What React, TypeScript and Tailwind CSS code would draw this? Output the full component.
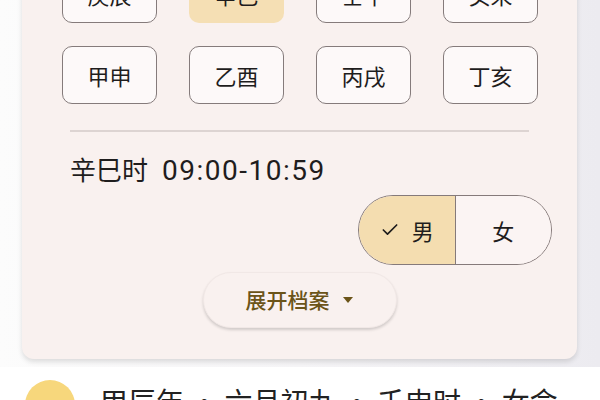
import { Check } from 'lucide-react';

const pillars = ['庚辰', '辛巳', '壬午', '癸未', '甲申', '乙酉', '丙戌', '丁亥'];
const selected = '辛巳';

export default function App() {
  return (
    <div
      className="w-[600px] h-[400px] overflow-hidden bg-white text-[#1f1d1d]"
      style={{ fontFamily: '"Noto Sans CJK SC", "Noto Sans", sans-serif' }}
    >
      {/* profile card area */}
      <div className="bg-gradient-to-r from-[#fcfcfc] via-[#f6f5f7] to-[#ecebf0] pb-[8px]">
        <div className="ml-[22px] w-[555px] -mt-[70px] rounded-b-[12px] bg-[#f9f1ef] pt-[35px] pb-[31px] shadow-[0_3px_5px_rgba(0,0,0,0.12)]">
          <div className="grid grid-cols-[repeat(4,95px)] gap-x-[32px] gap-y-[23px] pl-[40px]">
            {pillars.map((p) => (
              <div
                key={p}
                className={
                  p === selected
                    ? 'h-[58px] rounded-[10px] bg-[#f5dfb4] flex items-center justify-center text-[22px]'
                    : 'h-[58px] rounded-[10px] bg-[#fdf9f9] border-[1.5px] border-[#857b7b] flex items-center justify-center text-[22px]'
                }
              >
                {p}
              </div>
            ))}
          </div>

          <div className="mx-[48px] mt-[26px] h-[2px] bg-[#ddd4d2]" />

          <div className="pl-[48px] mt-[21px] text-[26px] leading-[32px] flex items-baseline">
            <span>辛巳时</span>
            <span className="ml-[14px] text-[28px] tracking-[1.5px] font-['Roboto',sans-serif]">09:00-10:59</span>
          </div>

          {/* gender toggle */}
          <div className="flex justify-end pr-[25px] mt-[8px]">
            <div className="flex h-[70px] w-[194px] rounded-full border-[1.5px] border-[#857a7a] overflow-hidden text-[22px]">
              <div className="flex-1 flex items-center justify-center gap-[12px] bg-[#f4ddb0] border-r-[1.5px] border-[#857a7a]">
                <Check size={20} strokeWidth={2} />
                <span>男</span>
              </div>
              <div className="flex-1 flex items-center justify-center bg-[#fbf4f3]">女</div>
            </div>
          </div>

          <div className="flex justify-center mt-[7px]">
            <div className="flex items-center gap-[12px] h-[56px] w-[194px] justify-center rounded-full bg-[#f9f1ef] shadow-[0_2px_3px_rgba(0,0,0,0.16)] border border-[#f1e8e6] text-[21px] font-medium text-[#6b5418]">
              <span>展开档案</span>
              <svg width="12" height="8" viewBox="0 0 12 8">
                <path d="M1 1 L11 1 L6 7 Z" fill="#6b5418" />
              </svg>
            </div>
          </div>
        </div>
      </div>

      {/* next list row (cut off) */}
      <div className="flex items-start gap-[25px] pl-[25px] pt-[13px] bg-white">
        <div className="w-[50px] h-[50px] rounded-full bg-[#f7d77c] shrink-0" />
        <div className="text-[28px] leading-[36px] mt-[3px] text-[#222]">甲辰年 · 六月初九 · 壬申时 · 女命</div>
      </div>
    </div>
  );
}
